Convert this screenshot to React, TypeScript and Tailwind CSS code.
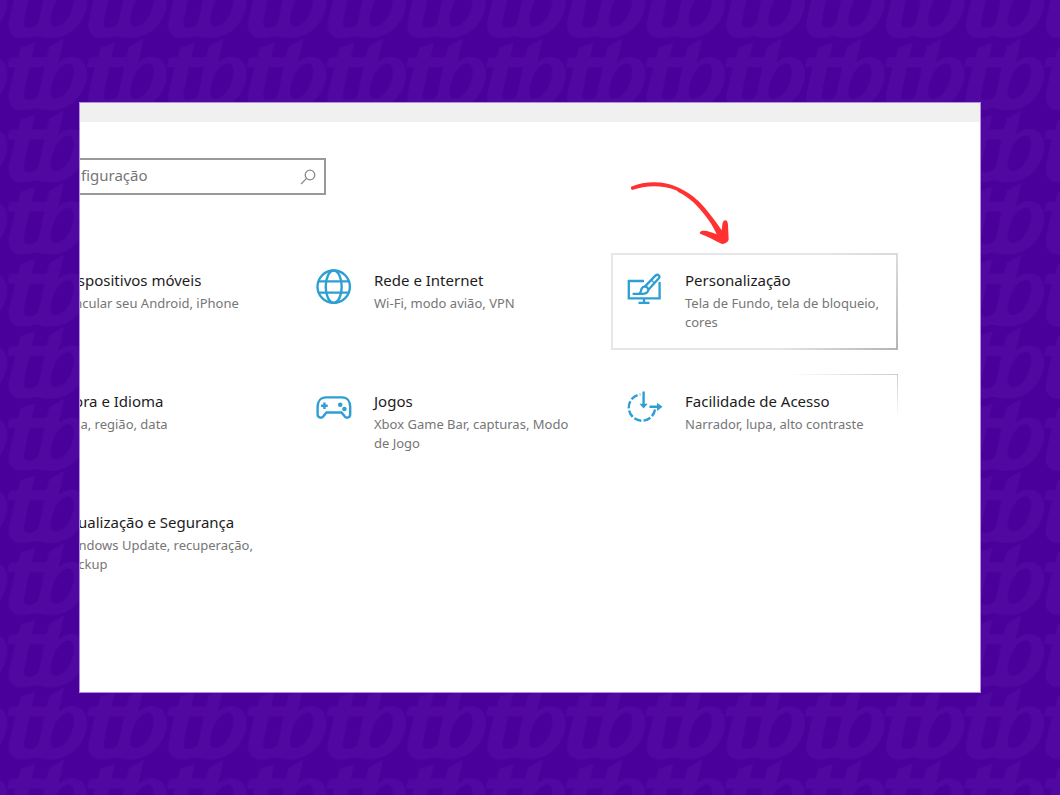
import type { ReactNode } from "react";

interface Setting {
  id: number;
  title: string;
  desc: string;
  icon?: ReactNode;
  state?: "active" | "near";
}

function Wallpaper() {
  return (
    <svg className="absolute inset-0 h-full w-full" aria-hidden="true">
      <defs>
        <pattern
          id="mark"
          x="7.33"
          y="38.33"
          width="79.77"
          height="72.13"
          viewBox="22 115 239.3 216.4"
          patternUnits="userSpaceOnUse"
        >
          <path
            fill="#5108a0"
            fillRule="evenodd"
            d="M62 143 L105 128 L95 172 H140 L148 140 L192 115 L175 190 C190 168 242 160 257 198 C275 250 230 332 150 331 C130 331 115 325 105 325 C90 328 80 331 65 331 C35 331 20 310 28 275 L45 202 H22 L25 185 Q28 172 38 172 H55 Z M88 202 H133 L118 275 Q115 300 85 300 Q68 300 72 280 Z M206 190 C165 195 150 260 152 285 C154 305 190 300 208 265 C225 235 228 190 206 190 Z"
          />
        </pattern>
      </defs>
      <rect width="100%" height="100%" fill="url(#mark)" />
    </svg>
  );
}

function GlobeIcon() {
  return (
    <svg viewBox="0 0 36 36" className="h-9 w-9" fill="none" stroke="#2d9fd3" strokeWidth="2.4">
      <circle cx="17.7" cy="17.7" r="16.2" />
      <ellipse cx="17.7" cy="17.7" rx="8" ry="16.2" />
      <path d="M3 12.4H32.4M3 23.6H32.4" />
    </svg>
  );
}

function GamepadIcon() {
  return (
    <svg viewBox="0 0 36 36" className="h-9 w-9" fill="none" stroke="#2d9fd3" strokeWidth="2.4">
      <path d="M10 7.4H26C31 7.4 34.2 11 34.2 17V24C34.2 28.4 29.5 28.8 28 25.5L25.5 22.5H10.5L8 25.5C6.5 28.8 1.6 28.4 1.6 24V17C1.6 11 5 7.4 10 7.4Z" />
      <path d="M8.4 12.4V19M5.1 15.7H11.7" />
      <circle cx="24.2" cy="14.8" r="2.3" fill="#2d9fd3" stroke="none" />
      <circle cx="28.4" cy="19" r="2.3" fill="#2d9fd3" stroke="none" />
    </svg>
  );
}

function PersonalizeIcon() {
  return (
    <svg viewBox="0 0 36 36" className="h-9 w-9" fill="none" stroke="#2d9fd3" strokeWidth="2.3">
      <path d="M17 12H1.8V29.4H32.6V13M17 29.4V33.6M11.5 33.8H22.5" />
      <path d="M17.8 17.6L28.4 6.6C30.8 4.4 33.8 7 31.6 9.6L21.4 20.8" />
      <path d="M24 10.8L27.6 14.2" strokeWidth="1.4" />
      <path d="M5.6 24.8H16C19.6 24.8 21.8 22.6 21.2 20C20.4 17.2 16.4 16.8 14.8 19.4C13.6 21.4 14.4 23.6 12 24.8" />
    </svg>
  );
}

function AccessIcon() {
  return (
    <svg viewBox="0 0 36 36" className="h-9 w-9" fill="none" stroke="#2d9fd3" strokeWidth="2.4">
      <path d="M28 19.5A13.2 13.2 0 1 1 13.4 4.4" strokeDasharray="7.4 2.2" />
      <path d="M16.6 1.6V14M22.5 16.8H30" />
      <path d="M12.4 13.8H20.8L16.6 18.6ZM30 12.7V20.9L35.6 16.8Z" fill="#2d9fd3" stroke="none" />
    </svg>
  );
}

function RedArrow() {
  return (
    <svg
      viewBox="87 30 300 198"
      className="pointer-events-none absolute -top-[73px] left-[18px] h-[66px] w-[100px]"
      aria-hidden="true"
    >
      <path
        fill="#ff3131"
        d="M93 50C140 31 195 34 231 51C262 66 280 78 296 94C322 120 345 152 365 181C367 172 366 158 371 153C377 147 384 153 384 165L386 208C386 215 374 223 366 222C345 212 325 200 302 192C297 188 300 184 308 182C322 181 336 187 350 193C340 170 328 152 316 137C304 122 292 108 280 97C266 84 250 73 235 66C232 65 232 62 228 61C190 45 140 44 96 60Q92 58 93 50Z"
      />
    </svg>
  );
}

const settings: Setting[] = [
  { id: 1, title: "Dispositivos móveis", desc: "Vincular seu Android, iPhone" },
  { id: 2, title: "Rede e Internet", desc: "Wi-Fi, modo avião, VPN", icon: <GlobeIcon /> },
  {
    id: 3,
    title: "Personalização",
    desc: "Tela de Fundo, tela de bloqueio, cores",
    icon: <PersonalizeIcon />,
    state: "active",
  },
  { id: 4, title: "Hora e Idioma", desc: "Fala, região, data" },
  { id: 5, title: "Jogos", desc: "Xbox Game Bar, capturas, Modo de Jogo", icon: <GamepadIcon /> },
  {
    id: 6,
    title: "Facilidade de Acesso",
    desc: "Narrador, lupa, alto contraste",
    icon: <AccessIcon />,
    state: "near",
  },
  { id: 7, title: "Atualização e Segurança", desc: "Windows Update, recuperação, backup" },
];

// the gradient shows through the padding, as the reveal light on the border
const frames = {
  active: "p-[2px] bg-[radial-gradient(ellipse_120px_120px_at_bottom_right,#b4b4b4,#e6e6e6)]",
  near: "p-px bg-[radial-gradient(ellipse_110px_45px_at_top_right,#cccccc,#ffffff)]",
  idle: "p-[2px]",
};

const insets = {
  active: "p-[14px]",
  near: "p-[15px]",
  idle: "p-[14px]",
};

function SettingCard({ setting }: { setting: Setting }) {
  const state = setting.state ?? "idle";

  return (
    <div className={`relative ${frames[state]}`}>
      <a href="#" className={`flex h-full min-h-[93px] gap-[22px] bg-white ${insets[state]}`}>
        <span className="h-9 w-9 shrink-0">{setting.icon}</span>
        <span className="block">
          <span className="block text-[15px] leading-[22px] text-[#1c1c1c]">{setting.title}</span>
          <span className="mt-[3px] block text-[13px] leading-[19px] text-[#767676]">{setting.desc}</span>
        </span>
      </a>
      {state === "active" && <RedArrow />}
    </div>
  );
}

export default function App() {
  return (
    <div className="relative flex min-h-screen bg-[#4a009b] px-[79px] py-[102px] font-['Noto_Sans','Open_Sans',sans-serif]">
      <Wallpaper />
      <main className="relative flex-1 overflow-hidden border border-[#b08fdc] bg-white">
        <div className="h-[19px] bg-[#f0f0f0]" />

        <form className="mt-9 -ml-[140px] flex h-[37px] w-[386px] items-center border-2 border-[#999999] pr-2 pl-3">
          <input
            type="text"
            aria-label="Localizar uma configuração"
            placeholder="Localizar uma configuração"
            className="min-w-0 flex-1 pb-0.5 text-[15px] outline-none placeholder:text-[#767676]"
          />
          <button type="button" aria-label="Pesquisar">
            <svg viewBox="0 0 16 16" className="h-4 w-4" fill="none" stroke="#8a8a8a" strokeWidth="1.3">
              <circle cx="10" cy="6" r="4.8" />
              <path d="M6.6 9.4L1 15" />
            </svg>
          </button>
        </form>

        <div className="mt-[58px] mr-[82px] -ml-[91px] grid grid-cols-3 gap-6">
          {settings.map((setting) => (
            <SettingCard key={setting.id} setting={setting} />
          ))}
        </div>
      </main>
    </div>
  );
}
